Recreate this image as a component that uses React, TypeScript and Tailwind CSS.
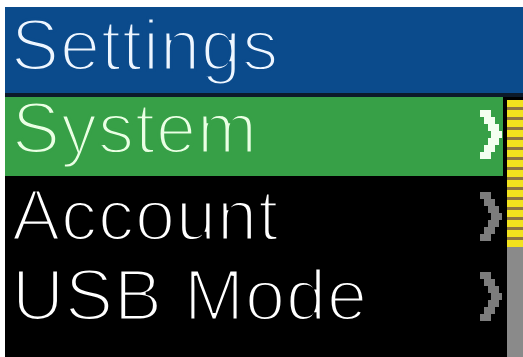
import React from 'react';

interface MenuItem {
  label: string;
  active?: boolean;
  offset: string;
}

const items: MenuItem[] = [
  { label: 'System', active: true, offset: 'pt-0' },
  { label: 'Account', offset: 'pt-[8px]' },
  { label: 'USB Mode', offset: 'pt-[8px]' },
];

// pixel-style chevron made of stepped blocks
const steps = [0, 4, 8, 11, 8, 4, 0];

const Chevron: React.FC<{ color: string }> = ({ color }) => (
  <svg width="22" height="49" viewBox="0 0 22 49" shapeRendering="crispEdges">
    {steps.map((x, k) => (
      <rect key={k} x={x} y={k * 7} width="11" height="7" fill={color} />
    ))}
  </svg>
);

const App: React.FC = () => {
  return (
    <div className="w-[523px] h-[357px] bg-white pt-[7px] pl-[5px] overflow-hidden" style={{ fontFamily: '"Liberation Sans", Arial, sans-serif' }}>
      <div className="w-full h-full bg-black flex flex-col">
        {/* Header */}
        <div className="h-[86px] bg-[#0b4b8c] pl-[6px] border-b-4 border-[#0c1a2a] box-content">
          <span className="block text-[72px] leading-[76px] tracking-[1px] text-[#eef6ff] [-webkit-text-stroke:3px_#0b4b8c]">Settings</span>
        </div>

        <div className="flex flex-1 gap-[4px]">
          {/* Menu rows */}
          <div className="flex-1 flex flex-col">
            {items.map((item, i) => (
              <div
                key={item.label}
                className={`flex items-start justify-between pl-[7px] pr-[1px] ${i === 0 ? 'h-[79px]' : 'h-[80px]'} ${item.active ? 'bg-[#37a047]' : 'bg-black'}`}
              >
                <span
                  className={`block text-[72px] leading-[62px] tracking-[1px] whitespace-nowrap ${item.offset} ${
                    item.active ? 'text-[#eaffe4] [-webkit-text-stroke:3px_#37a047]' : 'text-white [-webkit-text-stroke:3px_#000000]'
                  }`}
                >
                  {item.label}
                </span>
                <div className={i === 0 ? 'pt-[13px]' : 'pt-[16px]'}>
                  <Chevron color={item.active ? '#f4fff0' : '#7c7c7c'} />
                </div>
              </div>
            ))}
          </div>

          {/* Scrollbar */}
          <div className="w-[16px] flex flex-col pt-[3px]">
            <div className="h-[147px] bg-[repeating-linear-gradient(180deg,#f2e21e_0px,#f2e21e_7px,#8c7444_7px,#8c7444_10px)]"></div>
            <div className="flex-1 bg-[#8a8a8a]"></div>
          </div>
        </div>
      </div>
    </div>
  );
};

export default App;
